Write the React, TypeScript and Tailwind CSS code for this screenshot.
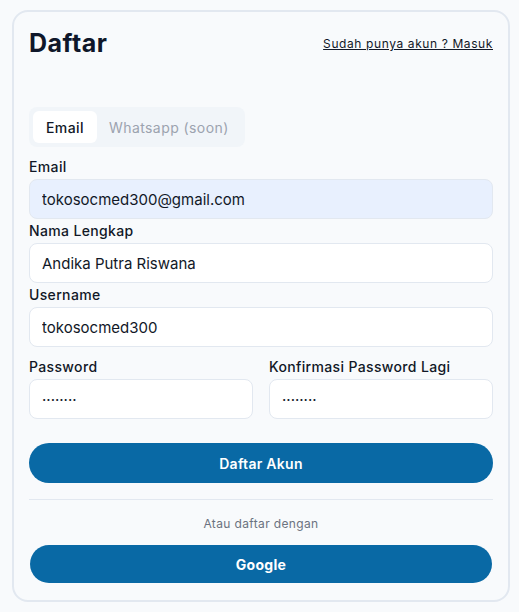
import * as React from "react";

type FieldProps = {
  label: string;
  value: string;
  autofill?: boolean;
  className?: string;
};

function Field({ label, value, autofill, className }: FieldProps) {
  return (
    <div className={className}>
      <label className="block text-[14px] font-medium leading-5 tracking-[0.025em] text-[#111827]">{label}</label>
      <input
        type="text"
        defaultValue={value}
        readOnly
        className={
          "mt-[2px] block h-10 w-full rounded-lg border border-[#e2e8f0] px-3 text-[15px] text-[#111827] outline-none " +
          (autofill ? "bg-[#e8f0fe]" : "bg-white")
        }
      />
    </div>
  );
}

// password fields drawn with small dots like the original font's bullet
const DOTS = "\u00b7\u00b7\u00b7\u00b7\u00b7\u00b7\u00b7\u00b7";

export default function App() {
  const [tab, setTab] = React.useState<"email" | "wa">("email");

  return (
    <div
      className="min-h-[612px] bg-[#f8fafc] pl-3 pr-[9px] pt-[10px] pb-3"
      style={{ fontFamily: "Inter, 'Noto Sans', sans-serif" }}
    >
      <div className="rounded-2xl border-2 border-[#e2e8f0] bg-[#f8fafc] px-[15px] pt-[15px] pb-[17px]">
        {/* header */}
        <div className="flex items-start justify-between">
          <h1 className="text-[25px] font-bold leading-8 tracking-[0.02em] text-[#0f172a]">Daftar</h1>
          <a href="#" className="mt-[8px] text-[12px] tracking-[0.05em] text-[#111827] underline">
            Sudah punya akun ? Masuk
          </a>
        </div>

        {/* tabs */}
        <div className="mt-[48px] inline-flex rounded-lg bg-[#f1f5f9] p-1">
          <button
            onClick={() => setTab("email")}
            className={
              "h-8 w-16 rounded-md text-[14px] tracking-[0.03em] " +
              (tab === "email" ? "bg-white font-medium text-[#111827]" : "text-[#9ca3af]")
            }
          >
            Email
          </button>
          <button
            onClick={() => setTab("wa")}
            className={
              "h-8 rounded-md px-3 text-[14px] tracking-[0.03em] " +
              (tab === "wa" ? "bg-white font-medium text-[#111827]" : "text-[#9ca3af]")
            }
          >
            Whatsapp (soon)
          </button>
        </div>

        {/* form */}
        <div className="mt-[10px] flex flex-col gap-[2px]">
          <Field label="Email" value="tokosocmed300@gmail.com" autofill />
          <Field label="Nama Lengkap" value="Andika Putra Riswana" />
          <Field label="Username" value="tokosocmed300" />
        </div>
        <div className="mt-[10px] grid grid-cols-2 gap-4">
          <Field label="Password" value={DOTS} />
          <Field label="Konfirmasi Password Lagi" value={DOTS} />
        </div>

        <button className="mt-[24px] h-10 w-full rounded-full bg-[#0969a5] text-[14px] font-semibold tracking-[0.02em] text-white">
          Daftar Akun
        </button>

        <div className="mt-4 border-t border-[#e2e8f0]" />
        <p className="mt-[15px] text-center text-[12px] tracking-[0.03em] text-[#6b7280]">Atau daftar dengan</p>

        <div className="px-px">
          <button className="mt-[12px] h-[38px] w-full rounded-full bg-[#0969a5] text-[14px] font-bold tracking-[0.02em] text-white">
            Google
          </button>
        </div>
      </div>
    </div>
  );
}
